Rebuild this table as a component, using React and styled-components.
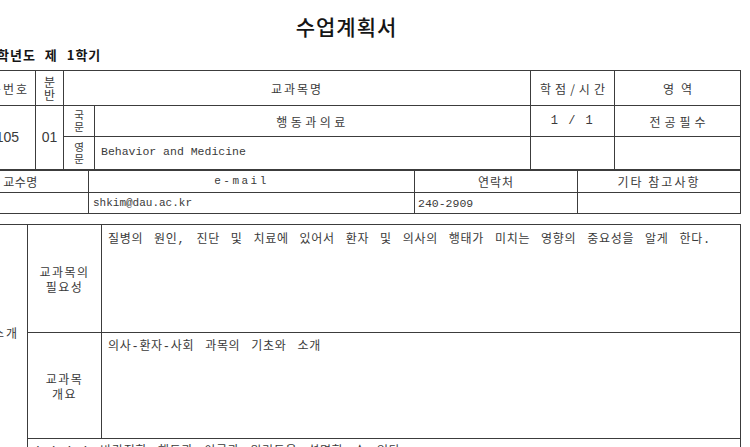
import React from 'react'
import styled, { createGlobalStyle } from 'styled-components'

const KR = '"Noto Sans CJK KR", sans-serif'
const MONO = '"Liberation Mono", "Noto Sans CJK KR", monospace'
const LINE = '#3c3c3c'

const GlobalStyle = createGlobalStyle`
	html, body {
		margin: 0;
		padding: 0;
		background: #ffffff;
		overflow: hidden;
	}

	body {
		font-family: ${KR};
		color: #3a3a3a;
	}
`

const Page = styled.div`
	width: 789px;
	margin-left: -48px;
	padding-top: 14px;
	display: flex;
	flex-direction: column;
`

const Title = styled.h1`
	margin: 0;
	font-size: 21px;
	line-height: 24px;
	font-weight: 500;
	letter-spacing: 1px;
	text-align: center;
	color: #151515;
`

const Term = styled.div`
	margin: 9px 0 7px;
	padding-left: 45px;
	font-size: 13px;
	line-height: 16px;
	font-weight: 700;
	letter-spacing: 1px;
	word-spacing: 5px;
	color: #151515;
`

const Grid = styled.div`
	display: grid;
	grid-template-columns: ${p => p.$cols};
	grid-template-rows: ${p => p.$rows};
	margin-top: ${p => p.$gap || 0}px;
	border-top: 1px solid ${LINE};
	border-left: 1px solid ${LINE};
`

const align = p => (p.$left ? 'flex-start' : p.$right ? 'flex-end' : 'center')

const Cell = styled.div`
	box-sizing: border-box;
	grid-column: ${p => p.$col};
	grid-row: ${p => p.$row || 'auto'};
	display: flex;
	align-items: ${p => (p.$top ? 'flex-start' : 'center')};
	justify-content: ${align};
	padding: ${p => p.$pad || '0'};
	border-right: 1px solid ${LINE};
	border-bottom: ${p => (p.$open ? 'none' : `1px solid ${LINE}`)};
	overflow: hidden;
	font-size: 12px;
	line-height: 15px;
	letter-spacing: ${p => (p.$ls != null ? p.$ls : 2)}px;
	text-align: center;
	white-space: pre;
`

const Stack = styled.span`
	font-size: ${p => p.$size || 12}px;
	line-height: ${p => p.$lh || 13}px;
	letter-spacing: 0;
`

const Num = styled.span`
	font-family: "Liberation Sans", sans-serif;
	font-size: 14px;
	letter-spacing: 0;
`

const Mono = styled.span`
	font-family: ${MONO};
	font-size: ${p => p.$size || 11.5}px;
	letter-spacing: ${p => p.$ls || 0}px;
`

const Body = styled.p`
	margin: 0;
	font-family: ${MONO};
	font-size: 12px;
	line-height: 16px;
	letter-spacing: 0.7px;
	word-spacing: 3px;
	text-align: left;
`

function App() {
	return (
		<>
			<GlobalStyle />
			<Page>
				<Title>수업계획서</Title>
				<Term>학년도 제 1학기</Term>

				<Grid $cols="83px 28px 31px 436px 84px 126px" $rows="35px 31px 33px">
					<Cell $col="1" $row="1" $right $pad="0 6px 0 0">과목번호</Cell>
					<Cell $col="2" $row="1"><Stack>{'분\n반'}</Stack></Cell>
					<Cell $col="3 / 5" $row="1">교과목명</Cell>
					<Cell $col="5" $row="1" $ls={4} $pad="0 0 0 4px">학점/시간</Cell>
					<Cell $col="6" $row="1" $ls={7} $pad="0 0 0 7px">영역</Cell>

					<Cell $col="1" $row="2 / 4" $right $pad="0 16px 0 0"><Num>105</Num></Cell>
					<Cell $col="2" $row="2 / 4"><Num>01</Num></Cell>
					<Cell $col="3" $row="2"><Stack $size={10.5} $lh={12}>{'국\n문'}</Stack></Cell>
					<Cell $col="4" $row="2" $ls={3.5}>행동과의료</Cell>
					<Cell $col="5" $row="2"><Mono $size={12} $ls={1.5}>1 / 1</Mono></Cell>
					<Cell $col="6" $row="2" $ls={4} $pad="0 0 0 4px">전공필수</Cell>

					<Cell $col="3" $row="3"><Stack $size={10.5} $lh={12}>{'영\n문'}</Stack></Cell>
					<Cell $col="4" $row="3" $left $pad="0 0 3px 6px"><Mono>Behavior and Medicine</Mono></Cell>
					<Cell $col="5" $row="3" />
					<Cell $col="6" $row="3" />
				</Grid>

				<Grid $cols="136px 326px 163px 163px" $rows="22px 21px">
					<Cell $col="1" $row="1" $ls={0.5}>교수명</Cell>
					<Cell $col="2" $row="1" $pad="0 20px 0 0"><Mono $size={11} $ls={2.5}>e-mail</Mono></Cell>
					<Cell $col="3" $row="1" $ls={1}>연락처</Cell>
					<Cell $col="4" $row="1">기타 참고사항</Cell>

					<Cell $col="1" $row="2" />
					<Cell $col="2" $row="2" $left $pad="0 0 0 4px"><Mono $size={11}>shkim@dau.ac.kr</Mono></Cell>
					<Cell $col="3" $row="2" $left $pad="0 0 0 3px"><Mono $size={11.5}>240-2909</Mono></Cell>
					<Cell $col="4" $row="2" />
				</Grid>

				<Grid $cols="75px 74px 639px" $rows="108px 106px 40px" $gap={10}>
					<Cell $col="1" $row="1 / 3" $open $right $pad="0 8px 0 0">과목소개</Cell>
					<Cell $col="2" $row="1" $ls={1.5}>{'교과목의\n필요성'}</Cell>
					<Cell $col="3" $row="1" $top $left $pad="7px 0 0 6px">
						<Body>질병의 원인, 진단 및 치료에 있어서 환자 및 의사의 행태가 미치는 영향의 중요성을 알게 한다.</Body>
					</Cell>

					<Cell $col="2" $row="2" $ls={1.5}>{'교과목\n개요'}</Cell>
					<Cell $col="3" $row="2" $top $left $pad="6px 0 0 6px">
						<Body>의사-환자-사회 과목의 기초와 소개</Body>
					</Cell>

					<Cell $col="1" $row="3" $open />
					<Cell $col="2 / 4" $row="3" $top $left $pad="5px 0 0 6px">
						<Body>1.1.1.1 바람직한 행동과 이론과 원리들을 설명할 수 있다.</Body>
					</Cell>
				</Grid>
			</Page>
		</>
	)
}

export default App
